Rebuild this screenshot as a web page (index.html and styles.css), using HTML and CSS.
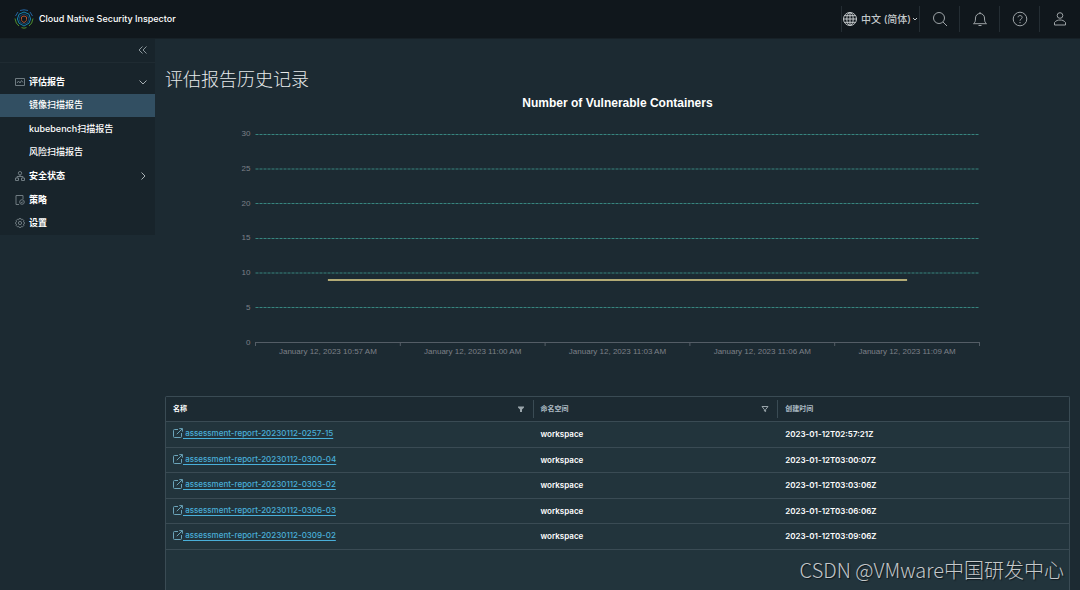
FILE: index.html
```html
<!DOCTYPE html>
<html lang="zh-CN">
<head>
<meta charset="utf-8">
<title>Cloud Native Security Inspector</title>
<meta name="viewport" content="width=device-width, initial-scale=1">
<link rel="stylesheet" href="styles.css">
</head>
<body>
<svg class="defs" aria-hidden="true">
  <symbol id="popout" viewBox="0 0 10 10">
    <path d="M5 1.5H1.5a1 1 0 0 0-1 1v6a1 1 0 0 0 1 1h6a1 1 0 0 0 1-1V5M3.8 6.2 9.3.7M6.3.6h3.1v3.1"/>
  </symbol>
</svg>
<header class="topbar">
  <a class="brand" href="#">
    <svg class="logo" viewBox="0 0 20 20" aria-hidden="true">
      <path class="l-blue" d="M6 1.500 10 .8l4 .7M16 3l2.500 4M4 3 1.500 7"/>
      <path class="l-cyan" d="M10 3 15 5.200 16.600 10 15 14.200 10 17 5 14.200 3.400 10 5 5.200Z"/>
      <path class="l-green" d="M1 9.500 2.300 14 5 17M19 9.500 17.700 14 15 17M7.500 18.600 10 19.200l2.500-.6"/>
      <path class="l-navy" d="m10 5 3.800 1.800L15 10l-1.500 3.500L10 15l-3.500-1.500L5 10l1.200-3.200Z"/>
      <path class="l-orange" d="m10 7 2.500 1v2.500c0 1.500-1 2.300-2.500 3-1.500-.7-2.500-1.500-2.500-3V8Z"/>
    </svg>
    <span>Cloud Native Security Inspector</span>
  </a>
  <div class="tools">
    <label class="lang">
      <svg class="globe" viewBox="0 0 16 16" aria-hidden="true"><circle cx="8" cy="8" r="6.500"/><ellipse cx="8" cy="8" rx="3.200" ry="6.500"/><path d="M8 1.500v13M1.500 8h13M2.500 4.700h11M2.500 11.300h11"/></svg>
      <select aria-label="语言"><option>中文 (简体)</option><option>English</option></select>
      <svg class="caret" viewBox="0 0 6 6" aria-hidden="true"><path d="m1 2 2 2 2-2"/></svg>
    </label>
    <button class="tool" aria-label="搜索"><svg viewBox="0 0 16 16"><circle cx="7" cy="7" r="5.500"/><path d="m11 11 4 4"/></svg></button>
    <button class="tool" aria-label="通知"><svg viewBox="0 0 16 16"><path d="M1.500 12.700C3 11.500 3.500 10.500 3.500 7a4.500 4.500 0 0 1 9 0c0 3.500.5 4.500 2 5.700ZM6.500 14.500h3M8 1v1.500"/></svg></button>
    <button class="tool" aria-label="帮助"><svg viewBox="0 0 16 16"><circle cx="8" cy="8" r="6.800"/><path d="M6 6.300C6 4 10.200 4 10.200 6.400 10.200 8 8 7.900 8 9.700M8 11v1.200"/></svg></button>
    <button class="tool" aria-label="用户"><svg viewBox="0 0 16 16"><circle cx="8" cy="4.500" r="2.800"/><path d="M2.500 14v-2.500C4 9.500 6 9 8 9s4 .5 5.500 2.500V14Z"/></svg></button>
  </div>
</header>
<div class="shell">
  <aside class="sidebar">
    <button class="collapse" aria-label="收起"><svg viewBox="0 0 10 10"><path d="M4.500 1.500 1 5l3.500 3.500M8.500 1.500 5 5l3.500 3.500"/></svg></button>
    <nav class="menu">
      <button class="group">
        <svg viewBox="0 0 10 10"><path d="M.5 1.500h9v7h-9ZM2 6l1.500-2L5 6l1.500-2.500L8 5.500"/></svg>
        <span>评估报告</span>
        <svg class="arrow" viewBox="0 0 8 8"><path d="m.5 2.500 3.500 3.500 3.500-3.500"/></svg>
      </button>
      <a class="sub active" href="#">镜像扫描报告</a>
      <a class="sub" href="#">kubebench扫描报告</a>
      <a class="sub" href="#">风险扫描报告</a>
      <button class="group">
        <svg viewBox="0 0 10 10"><circle cx="5" cy="2.200" r="1.700"/><path d="M5 4v1.500M2 7V5.500h6V7M.5 7h3v2.500h-3ZM6.500 7h3v2.500h-3Z"/></svg>
        <span>安全状态</span>
        <svg class="arrow" viewBox="0 0 8 8"><path d="m2.500.5 3.500 3.500-3.500 3.500"/></svg>
      </button>
      <a class="group" href="#">
        <svg viewBox="0 0 10 10"><path d="M4 9.500H1v-9h7V4"/><circle cx="7" cy="7" r="2.300"/><path d="m6 7 .8.800L8 6.400"/></svg>
        <span>策略</span>
      </a>
      <a class="group" href="#">
        <svg viewBox="0 0 10 10"><path d="m4 .6 2 0 .4 1.200 1.300-.5L9 2.800l-.6 1.100 1.100.6v1.200l-1.100.5.5 1.200-1.300 1.400-1.200-.5-.5 1.200H4.200l-.5-1.200-1.200.5-1.400-1.400.5-1.200-1.100-.5V4.500l1.100-.6L1 2.800l1.400-1.500 1.200.5Z"/><circle cx="5" cy="5" r="1.600"/></svg>
        <span>设置</span>
      </a>
    </nav>
  </aside>
  <main class="content">
    <h1>评估报告历史记录</h1>
    <figure class="chart">
      <figcaption>Number of Vulnerable Containers</figcaption>
      <svg class="plot" role="img" aria-label="Number of Vulnerable Containers">
        <g class="grid">
          <line x1="10%" x2="90%" y1="14.500" y2="14.500"/>
          <line x1="10%" x2="90%" y1="49" y2="49"/>
          <line x1="10%" x2="90%" y1="83.500" y2="83.500"/>
          <line x1="10%" x2="90%" y1="118.500" y2="118.500"/>
          <line x1="10%" x2="90%" y1="153" y2="153"/>
          <line x1="10%" x2="90%" y1="187.500" y2="187.500"/>
        </g>
        <g class="axis">
          <line x1="10%" x2="90%" y1="222.500" y2="222.500"/>
          <line x1="10%" x2="10%" y1="222" y2="226"/>
          <line x1="26%" x2="26%" y1="222" y2="226"/>
          <line x1="42%" x2="42%" y1="222" y2="226"/>
          <line x1="58%" x2="58%" y1="222" y2="226"/>
          <line x1="74%" x2="74%" y1="222" y2="226"/>
          <line x1="90%" x2="90%" y1="222" y2="226"/>
        </g>
        <line class="series" x1="18%" x2="82%" y1="160" y2="160"/>
        <g class="ylabels" transform="translate(-5 0)">
          <text x="10%" y="16">30</text>
          <text x="10%" y="51">25</text>
          <text x="10%" y="86">20</text>
          <text x="10%" y="120">15</text>
          <text x="10%" y="155">10</text>
          <text x="10%" y="190">5</text>
          <text x="10%" y="225">0</text>
        </g>
        <g class="xlabels">
          <text x="18%" y="234">January 12, 2023 10:57 AM</text>
          <text x="34%" y="234">January 12, 2023 11:00 AM</text>
          <text x="50%" y="234">January 12, 2023 11:03 AM</text>
          <text x="66%" y="234">January 12, 2023 11:06 AM</text>
          <text x="82%" y="234">January 12, 2023 11:09 AM</text>
        </g>
      </svg>
    </figure>
    <section class="datagrid">
      <table>
        <colgroup><col class="c-name"><col class="c-ns"><col></colgroup>
        <thead>
          <tr>
            <th class="sorted"><div class="head"><span>名称</span><button aria-label="筛选名称"><svg class="on" viewBox="0 0 8 8"><path d="M1 1.500h6v1L5 4.500V7H3V4.500L1 2.500Z"/></svg></button></div></th>
            <th><div class="head"><span>命名空间</span><button aria-label="筛选命名空间"><svg viewBox="0 0 8 8"><path d="M1 1.500h6L4.600 4.600v2L3.400 6V4.600Z"/></svg></button></div></th>
            <th><div class="head"><span>创建时间</span></div></th>
          </tr>
        </thead>
        <tbody>
          <tr><td><a href="#"><svg><use href="#popout"/></svg><span>&nbsp;assessment-report-20230112-0257-15</span></a></td><td>workspace</td><td>2023-01-12T02:57:21Z</td></tr>
          <tr><td><a href="#"><svg><use href="#popout"/></svg><span>&nbsp;assessment-report-20230112-0300-04</span></a></td><td>workspace</td><td>2023-01-12T03:00:07Z</td></tr>
          <tr><td><a href="#"><svg><use href="#popout"/></svg><span>&nbsp;assessment-report-20230112-0303-02</span></a></td><td>workspace</td><td>2023-01-12T03:03:06Z</td></tr>
          <tr><td><a href="#"><svg><use href="#popout"/></svg><span>&nbsp;assessment-report-20230112-0306-03</span></a></td><td>workspace</td><td>2023-01-12T03:06:06Z</td></tr>
          <tr><td><a href="#"><svg><use href="#popout"/></svg><span>&nbsp;assessment-report-20230112-0309-02</span></a></td><td>workspace</td><td>2023-01-12T03:09:06Z</td></tr>
        </tbody>
      </table>
    </section>
  </main>
</div>
<div class="watermark">CSDN @VMware中国研发中心</div>
</body>
</html>
```

FILE: styles.css
```css
* { box-sizing: border-box; }
body {
  margin: 0;
  min-height: 100vh;
  display: flex;
  flex-direction: column;
  position: relative;
  background: #1c2a32;
  color: #fff;
  font: 500 9px/12px Inter, "Noto Sans CJK SC", sans-serif;
}
button, select {
  margin: 0;
  padding: 0;
  border: 0;
  background: none;
  color: inherit;
  font: inherit;
}
a { color: inherit; text-decoration: none; }
svg { fill: none; stroke: currentColor; flex: none; }
.defs { display: none; }

.topbar {
  display: flex;
  justify-content: space-between;
  align-items: center;
  height: 39px;
  background: #10171c;
  border-bottom: 1px solid #172127;
}
.brand {
  display: flex;
  align-items: center;
  gap: 5px;
  padding-left: 14px;
}
.logo { width: 20px; height: 20px; }
.l-blue { stroke: #2464a0; }
.l-cyan { stroke: #1683ad; }
.l-green { stroke: #4f8e2e; }
.l-navy { stroke: #17456c; }
.l-orange { stroke: #b3532f; }
.tools { display: flex; align-items: center; padding-right: 1px; }
.lang {
  display: flex;
  align-items: center;
  height: 26px;
  width: 78px;
  border-left: 1px solid #242d33;
  color: #c3c8ca;
  font-size: 10px;
}
.lang select { appearance: none; margin-left: 3px; width: 51px; }
.globe { width: 16px; height: 16px; }
.caret { width: 6px; height: 6px; }
.tool {
  width: 40px;
  height: 26px;
  border-left: 1px solid #242d33;
  color: #9ea4a7;
  display: flex;
  align-items: center;
  justify-content: center;
}
.tool svg { width: 16px; height: 16px; }

.shell { display: flex; flex: 1; }
.sidebar {
  width: 155px;
  flex: none;
  align-self: flex-start;
  background: #18242b;
}
.collapse {
  display: flex;
  align-items: center;
  justify-content: flex-end;
  width: 100%;
  height: 24px;
  padding: 0 7px 2px 0;
  border-bottom: 1px solid #1f2b32;
  color: #8b969b;
}
.collapse svg { width: 10px; height: 10px; }
.menu {
  display: grid;
  grid-auto-rows: 1fr;
  height: 172px;
  padding-top: 7px;
}
.group {
  display: flex;
  align-items: center;
  gap: 4px;
  padding: 0 8px 0 15px;
  font-weight: 700;
  text-align: left;
}
.group svg { width: 10px; height: 10px; color: #6f7b81; }
.group .arrow { width: 8px; height: 8px; margin-left: auto; color: #a8b0b4; }
.sub { display: flex; align-items: center; padding-left: 29px; }
.active { background: #324f62; }

.content {
  flex: 1;
  min-width: 0;
  display: flex;
  flex-direction: column;
  padding: 26px 10px 0 10px;
}
h1 {
  margin: 0;
  color: #e6e9ea;
  font: 300 18px/26px "Noto Sans CJK SC", sans-serif;
}
.chart { margin: 0; padding-top: 5px; font-family: "Liberation Sans", Arial, sans-serif; }
figcaption {
  text-align: center;
  font-size: 12px;
  line-height: 14px;
  font-weight: 700;
  padding-bottom: 10px;
}
.plot { display: block; width: 100%; height: 240px; overflow: visible; }
.grid { stroke: #37857f; stroke-dasharray: 3 1; }
.axis { stroke: #545d66; }
.series { stroke: #b3ab76; stroke-width: 2; }
.plot text { fill: #7d8088; stroke: none; font-size: 8px; font-weight: 400; }
.ylabels { text-anchor: end; }
.xlabels { text-anchor: middle; }

.datagrid {
  flex: 1;
  margin-top: 36px;
  border: 1px solid #3a4b54;
  border-bottom: 0;
  border-radius: 2px 2px 0 0;
  background: #22343c;
}
table { width: 100%; table-layout: fixed; border-collapse: separate; border-spacing: 0; }
.c-name { width: 40.7%; }
.c-ns { width: 27.1%; }
th, td { padding: 0 0 0 7px; text-align: left; border-bottom: 1px solid #3a4b54; }
th { height: 25px; padding-left: 0; background: #1c2a32; color: #adbbc4; font-size: 7px; font-weight: 600; }
.sorted { color: #fff; font-weight: 700; }
.head {
  display: flex;
  align-items: center;
  justify-content: space-between;
  height: 18px;
  padding: 0 8px 0 7px;
  border-right: 1px solid #3a4b54;
}
th:last-child .head { border-right: 0; }
.head button { display: flex; color: #9aa5ab; }
.head svg { width: 8px; height: 8px; }
.on { fill: currentColor; stroke: none; }
td { height: 26px; padding-bottom: 1px; font: 600 8px/12px Inter, sans-serif; }
tr:nth-child(even) td { height: 25px; }
td a { display: inline-flex; align-items: center; color: #49afd9; font-weight: 500; }
td a span { text-decoration: underline; text-underline-offset: 2px; }
td svg { width: 10px; height: 10px; color: #6ba4ba; }

.watermark {
  position: absolute;
  right: 16px;
  bottom: 6px;
  color: #c4c8ca;
  font: 300 20px/28px "Noto Sans CJK SC", sans-serif;
  text-shadow: 1px 1px 1px #10171c;
}
```
